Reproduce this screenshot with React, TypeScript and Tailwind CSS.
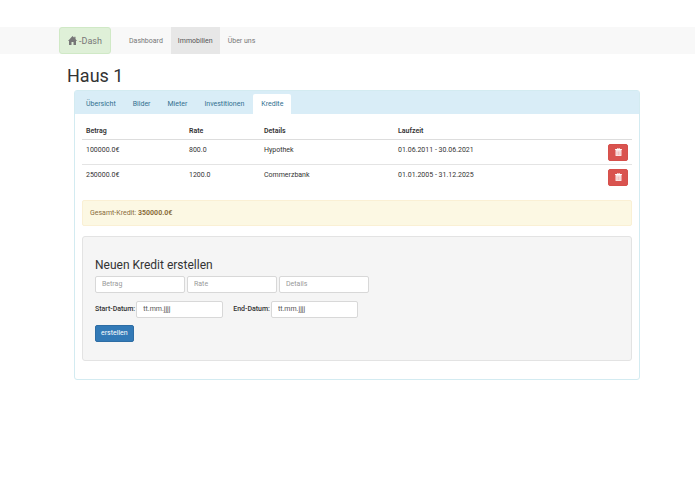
import React from 'react';

interface Kredit {
  betrag: string;
  rate: string;
  details: string;
  laufzeit: string;
}

const NAV_ITEMS = ['Dashboard', 'Immobilien', 'Über uns'];
const TABS = ['Übersicht', 'Bilder', 'Mieter', 'Investitionen', 'Kredite'];

const KREDITE: Kredit[] = [
  { betrag: '100000.0€', rate: '800.0', details: 'Hypothek', laufzeit: '01.06.2011 - 30.06.2021' },
  { betrag: '250000.0€', rate: '1200.0', details: 'Commerzbank', laufzeit: '01.01.2005 - 31.12.2025' },
];

const inputClass =
  'h-[17px] rounded-[2px] border border-[#d8d8d8] bg-white px-[6px] text-[7px] text-[#555]';

function HomeIcon() {
  return (
    <svg viewBox="0 0 18 18" className="h-[9px] w-[9px]" fill="currentColor" aria-hidden="true">
      <path d="M9 0 L12.5 3.5 V1.5 H15 V6 L18 10 H16 V18 H11 V12 H7 V18 H2 V10 H0 Z" />
    </svg>
  );
}

function TrashIcon() {
  return (
    <svg viewBox="0 0 14 16" className="h-[8px] w-[7px]" aria-hidden="true">
      <path
        fill="currentColor"
        fillRule="evenodd"
        d="M5 0H9Q10 0 10 1V2H13Q14 2 14 3V4H0V3Q0 2 1 2H4V1Q4 0 5 0ZM5 1V2H9V1Z"
      />
      <path fill="currentColor" d="M1 4H13V15Q13 16 12 16H2Q1 16 1 15Z" opacity="0.85" />
      <path stroke="#d9534f" strokeWidth="0.8" opacity="0.6" d="M4 7V14M7 7V14M10 7V14" />
    </svg>
  );
}

function Navbar() {
  return (
    <nav className="flex h-[27px] items-stretch gap-[1px] bg-[#f8f8f8] px-[59px] text-[#777]">
      <a
        href="#"
        className="mr-[10px] flex w-[52px] items-center gap-[2px] rounded-[3px] border border-[#d0e9c6] bg-[#dff0d8] pl-[8px] text-[9px]"
      >
        <HomeIcon />
        -Dash
      </a>
      {NAV_ITEMS.map((item) => (
        <a
          key={item}
          href="#"
          className={`flex items-center px-[7px] ${item === 'Immobilien' ? 'bg-[#e7e7e7] text-[#555]' : ''}`}
        >
          {item}
        </a>
      ))}
    </nav>
  );
}

function KreditTable() {
  return (
    <table className="w-full table-fixed border-collapse text-left">
      <colgroup>
        <col className="w-[103px]" />
        <col className="w-[75px]" />
        <col className="w-[134px]" />
        <col />
        <col className="w-[28px]" />
      </colgroup>
      <thead>
        <tr className="h-[18px] border-b border-[#ddd] align-bottom">
          <th className="px-[4px] pb-[3px] font-semibold">Betrag</th>
          <th className="px-[4px] pb-[3px] font-semibold">Rate</th>
          <th className="px-[4px] pb-[3px] font-semibold">Details</th>
          <th className="px-[4px] pb-[3px] font-semibold">Laufzeit</th>
          <td />
        </tr>
      </thead>
      <tbody>
        {KREDITE.map((kredit) => (
          <tr key={kredit.betrag} className="border-b border-[#e4e4e4] align-top last:border-b-0">
            <td className="px-[4px] pt-[5px]">{kredit.betrag}</td>
            <td className="px-[4px] pt-[5px]">{kredit.rate}</td>
            <td className="px-[4px] pt-[5px]">{kredit.details}</td>
            <td className="px-[4px] pt-[5px]">{kredit.laufzeit}</td>
            <td className="px-[4px] pt-[4px] pb-[3px]">
              <button
                type="button"
                aria-label="Löschen"
                className="flex h-[17px] w-[20px] items-center justify-center rounded-[2px] border border-[#d6504b] bg-[#d9534f] text-white"
              >
                <TrashIcon />
              </button>
            </td>
          </tr>
        ))}
      </tbody>
    </table>
  );
}

function KreditForm() {
  return (
    <form className="mt-[10px] rounded-[3px] border border-[#e3e3e3] bg-[#f5f5f5] px-[12px] pt-[20px] pb-[18px]">
      <h2 className="text-[12px] leading-[16px]">Neuen Kredit erstellen</h2>
      <div className="mt-[3px] flex gap-[2px]">
        {['Betrag', 'Rate', 'Details'].map((name) => (
          <input
            key={name}
            type="text"
            aria-label={name}
            placeholder={name}
            className={`${inputClass} w-[90px] placeholder:text-[#999]`}
          />
        ))}
      </div>
      <div className="mt-[8px] flex items-center gap-[10px]">
        <div className="flex items-center gap-[1px]">
          <label htmlFor="start" className="font-medium">Start-Datum:</label>
          <input id="start" type="text" placeholder="tt.mm.jjjj" className={`${inputClass} w-[87px] placeholder:text-[#555]`} />
        </div>
        <div className="flex items-center gap-[1px]">
          <label htmlFor="end" className="font-medium">End-Datum:</label>
          <input id="end" type="text" placeholder="tt.mm.jjjj" className={`${inputClass} w-[87px] placeholder:text-[#555]`} />
        </div>
      </div>
      <button
        type="button"
        className="mt-[7px] h-[17px] rounded-[2px] border border-[#2e6da4] bg-[#337ab7] px-[5px] text-white"
      >
        erstellen
      </button>
    </form>
  );
}

export default function App() {
  return (
    <div className="min-h-screen bg-white pt-[27px] font-[Roboto,sans-serif] text-[7px] leading-[10px] text-[#333]">
      <Navbar />
      <main className="px-[55px]">
        <h1 className="mt-[12px] pl-[12px] text-[18px] leading-[20px]">Haus 1</h1>
        <section className="mt-[4px] ml-[19px] rounded-[3px] border border-[#d3ebf1] pb-[18px]">
          <div className="flex h-[23px] items-end bg-[#d9edf7] pl-[3px] text-[#31708f]">
            {TABS.map((tab) => (
              <a
                key={tab}
                href="#"
                className={`flex h-[20px] items-center rounded-t-[2px] px-[8px] ${
                  tab === 'Kredite' ? 'bg-white' : 'mr-[1px]'
                }`}
              >
                {tab}
              </a>
            ))}
          </div>
          <div className="px-[7px] pt-[7px]">
            <KreditTable />
            <p className="mt-[11px] rounded-[2px] border border-[#faf0d4] bg-[#fcf8e3] p-[7px] text-[#8a6d3b]">
              Gesamt-Kredit: <strong>350000.0€</strong>
            </p>
            <KreditForm />
          </div>
        </section>
      </main>
    </div>
  );
}
